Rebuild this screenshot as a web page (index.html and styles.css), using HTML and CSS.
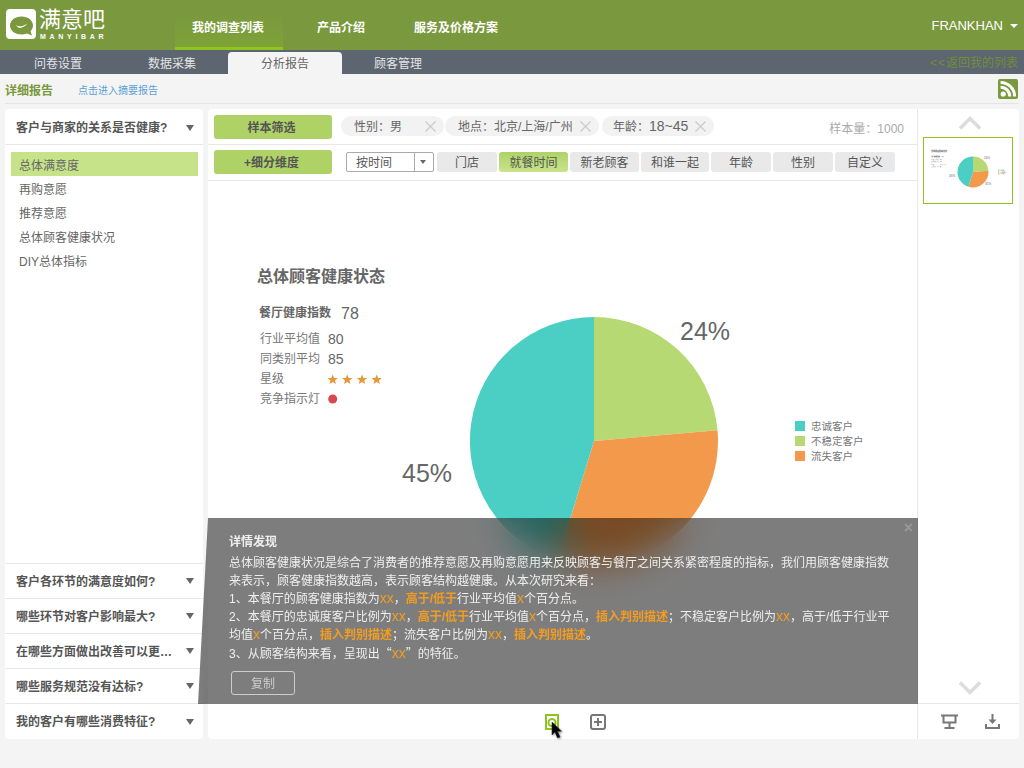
FILE: index.html
```html
<!DOCTYPE html>
<html lang="zh-CN">
<head>
    <meta charset="UTF-8">
    <meta name="viewport" content="width=device-width, initial-scale=1.0">
    <title>满意吧 - 分析报告</title>
    <link rel="stylesheet" href="styles.css">
</head>
<body>
    <!-- Top navigation -->
    <header class="topbar">
        <div class="logo">
            <svg class="logo-mark" width="30" height="30" viewBox="0 0 30 30">
                <rect width="30" height="30" rx="4" fill="#fff"/>
                <path d="M15.500 7.500C9 7.500 4 11.400 4 16.500c0 5 5 9 11.500 9 1.900 0 3.700-.3 5.300-.9l5.200 1.900-1.500-4.300c1.600-1.600 2.500-3.500 2.500-5.700 0-5.100-5-9-11.500-9z" fill="#7a983e"/>
                <path d="M10 16c2.500 2.200 6 1.800 11.500-1.500-4 4.500-9 6.500-11.500 1.500z" fill="#fff"/>
            </svg>
            <div class="logo-text">
                <span class="logo-cn">满意吧</span>
                <span class="logo-en">MANYIBAR</span>
            </div>
        </div>
        <nav class="mainnav">
            <a class="mainnav-item mainnav-active">我的调查列表</a>
            <a class="mainnav-item mainnav-products">产品介绍</a>
            <a class="mainnav-item mainnav-pricing">服务及价格方案</a>
        </nav>
        <div class="user">FRANKHAN<span class="user-caret"></span></div>
    </header>

    <div class="subnav">
        <a class="subnav-tab">问卷设置</a>
        <a class="subnav-tab">数据采集</a>
        <a class="subnav-tab subnav-active">分析报告</a>
        <a class="subnav-tab subnav-last">顾客管理</a>
        <a class="back-link"><span class="back-arrows">&lt;&lt;</span>返回我的列表</a>
    </div>

    <div class="reportbar">
        <strong class="report-title">详细报告</strong>
        <a class="report-link">点击进入摘要报告</a>
        <svg class="rss" width="20" height="20" viewBox="0 0 20 20">
            <rect width="20" height="20" rx="2" fill="#7a983e"/>
            <circle cx="5.200" cy="15" r="2.600" fill="#fff"/>
            <path d="M2.600 8.200a9.200 9.200 0 0 1 9.200 9.200M2.600 3.400a14 14 0 0 1 14 14" fill="none" stroke="#fff" stroke-width="3"/>
        </svg>
    </div>

    <div class="workspace">
        <!-- Question list -->
        <aside class="sidebar">
            <div class="question question-open">
                <span class="question-text">客户与商家的关系是否健康?</span><span class="caret"></span>
            </div>
            <ul class="metrics">
                <li class="metric metric-active">总体满意度</li>
                <li class="metric">再购意愿</li>
                <li class="metric">推荐意愿</li>
                <li class="metric">总体顾客健康状况</li>
                <li class="metric">DIY总体指标</li>
            </ul>
            <div class="questions">
                <div class="question"><span class="question-text">客户各环节的满意度如何?</span><span class="caret"></span></div>
                <div class="question"><span class="question-text">哪些环节对客户影响最大?</span><span class="caret"></span></div>
                <div class="question"><span class="question-text">在哪些方面做出改善可以更…</span><span class="caret"></span></div>
                <div class="question"><span class="question-text">哪些服务规范没有达标?</span><span class="caret"></span></div>
                <div class="question"><span class="question-text">我的客户有哪些消费特征?</span><span class="caret"></span></div>
            </div>
        </aside>

        <!-- Report -->
        <main class="report">
            <div class="toolrow toolrow-filter">
                <button class="action">样本筛选</button>
                <div class="chips">
                    <span class="chip chip-gender">性别：男<svg class="chip-x" width="11" height="11" viewBox="0 0 11 11"><path d="M.5.5l10 10M10.500.5l-10 10"/></svg></span>
                    <span class="chip chip-place">地点：北京/上海/广州<svg class="chip-x" width="11" height="11" viewBox="0 0 11 11"><path d="M.5.5l10 10M10.500.5l-10 10"/></svg></span>
                    <span class="chip chip-age"><span>年龄：<span class="chip-range">18~45</span></span><svg class="chip-x" width="11" height="11" viewBox="0 0 11 11"><path d="M.5.5l10 10M10.500.5l-10 10"/></svg></span>
                </div>
                <span class="sample">样本量：1000</span>
            </div>
            <div class="toolrow toolrow-dims">
                <button class="action">+细分维度</button>
                <div class="select"><span class="select-label">按时间</span><span class="select-arrow"></span></div>
                <div class="pills">
                    <span class="pill">门店</span>
                    <span class="pill pill-active">就餐时间</span>
                    <span class="pill">新老顾客</span>
                    <span class="pill pill-narrow">和谁一起</span>
                    <span class="pill">年龄</span>
                    <span class="pill">性别</span>
                    <span class="pill">自定义</span>
                </div>
            </div>

            <div class="chart-wrap">
                <svg class="chart" width="709" height="523" viewBox="0 0 709 523">
                    <defs>
                        <polygon id="star" points="0,-5.300 1.400,-1.700 5.200,-1.600 2.200,.7 3.300,4.400 0,2.300 -3.300,4.400 -2.200,.7 -5.200,-1.600 -1.400,-1.700" fill="#e5973a"/>
                    </defs>
                    <g id="chart-body">
                        <text class="ch-title" x="49" y="101">总体顾客健康状态</text>
                        <text class="ch-bold" x="51" y="136">餐厅健康指数</text>
                        <text class="ch-big" x="133" y="138">78</text>
                        <text class="ch-label" x="52" y="162">行业平均值</text>
                        <text class="ch-num" x="120" y="163">80</text>
                        <text class="ch-label" x="52" y="182">同类别平均</text>
                        <text class="ch-num" x="120" y="183">85</text>
                        <text class="ch-label" x="52" y="202">星级</text>
                        <use href="#star" x="124.700" y="198.700"/>
                        <use href="#star" x="139.200" y="198.700"/>
                        <use href="#star" x="154" y="198.700"/>
                        <use href="#star" x="168.700" y="198.700"/>
                        <text class="ch-label" x="52" y="222">竞争指示灯</text>
                        <circle cx="124.700" cy="218" r="4.500" fill="#d9484f"/>

                        <path d="M386 260V136A124 124 0 0 1 509.500 249.200Z" fill="#b7d973"/>
                        <path d="M386 260L509.500 249.200A124 124 0 0 1 349.700 378.600Z" fill="#f3994b"/>
                        <path d="M386 260L349.700 378.600A124 124 0 0 1 386 136Z" fill="#4bcfc5"/>
                        <text class="ch-pct" x="472" y="159">24%</text>
                        <text class="ch-pct" x="194" y="301">45%</text>

                        <rect x="587" y="240" width="10" height="10" fill="#4bcfc5"/>
                        <text class="ch-legend" x="603" y="249">忠诚客户</text>
                        <rect x="587" y="255" width="10" height="10" fill="#b7d973"/>
                        <text class="ch-legend" x="603" y="264">不稳定客户</text>
                        <rect x="587" y="270" width="10" height="10" fill="#f3994b"/>
                        <text class="ch-legend" x="603" y="279">流失客户</text>
                    </g>
                </svg>
            </div>

            <!-- Findings panel, slides over the chart -->
            <section class="findings">
                <span class="findings-close">×</span>
                <h3 class="findings-title">详情发现</h3>
                <p class="findings-text">总体顾客健康状况是综合了消费者的推荐意愿及再购意愿用来反映顾客与餐厅之间关系紧密程度的指标，我们用顾客健康指数<br>
                来表示，顾客健康指数越高，表示顾客结构越健康。从本次研究来看：<br>
                1、本餐厅的顾客健康指数为<em>xx</em>，<b>高于/低于</b>行业平均值<em>x</em>个百分点。<br>
                2、本餐厅的忠诚度客户比例为<em>xx</em>，<b>高于/低于</b>行业平均值<em>x</em>个百分点，<b>插入判别描述</b>；不稳定客户比例为<em>xx</em>，高于/低于行业平<br>
                均值<em>x</em>个百分点，<b>插入判别描述</b>；流失客户比例为<em>xx</em>，<b>插入判别描述</b>。<br>
                3、从顾客结构来看，呈现出<span class="quote">“</span><em>xx</em><span class="quote">”</span>的特征。</p>
                <button class="copy">复制</button>
            </section>

            <div class="report-foot">
                <span class="foot-icon"></span>
                <svg class="foot-add" width="16" height="16" viewBox="0 0 16 16">
                    <rect x="1" y="1" width="14" height="14" rx="2" fill="none" stroke="#777" stroke-width="2"/>
                    <path d="M8 4v8M4 8h8" stroke="#777" stroke-width="2"/>
                </svg>
                <svg class="pointer" width="13" height="18" viewBox="0 0 13 18">
                    <path d="M1 1v13l3-3 2.500 6 2.500-1-2.500-5.800H10.500z" fill="#000" stroke="#333" stroke-width=".6"/>
                </svg>
            </div>
        </main>

        <!-- Slide thumbnails -->
        <aside class="slides">
            <svg class="chevron" width="24" height="14" viewBox="0 0 24 14"><path d="M2 12.500L12 2.500l10 10" fill="none" stroke="#dcdcdc" stroke-width="3.500"/></svg>
            <div class="thumb">
                <svg width="88" height="65" viewBox="-6 -12 704 520">
                    <use href="#chart-body"/>
                    <text class="ch-pct" x="482" y="365">31%</text>
                </svg>
            </div>
            <svg class="chevron chevron-down" width="24" height="14" viewBox="0 0 24 14"><path d="M2 1.500l10 10 10-10" fill="none" stroke="#dcdcdc" stroke-width="3.500"/></svg>
            <div class="slides-foot">
                <svg width="17" height="15" viewBox="0 0 17 15">
                    <path d="M0 1.500h17M2.500 1.500v7h12v-7M8.500 8.500v5M3.500 14h10" fill="none" stroke="#777" stroke-width="2"/>
                </svg>
                <svg width="15" height="15" viewBox="0 0 15 15">
                    <path d="M7.500 0v8" stroke="#777" stroke-width="2"/>
                    <path d="M3.500 5.500h8l-4 4.500z" fill="#777"/>
                    <path d="M1 10v4h13v-4" fill="none" stroke="#777" stroke-width="2"/>
                </svg>
            </div>
        </aside>
    </div>
</body>
</html>
```

FILE: styles.css
```css
* {
    box-sizing: border-box;
}

body {
    margin: 0;
    height: 768px;
    overflow: hidden;
    background-color: #f4f4f4;
    font-family: "Liberation Sans", "Noto Sans CJK SC", sans-serif;
    font-size: 12px;
    color: #666;
}

/* top bar */
.topbar {
    display: flex;
    height: 50px;
    padding-left: 6px;
    background-color: #7a983e;
    color: #fff;
}

.logo {
    display: flex;
    align-items: flex-start;
    width: 169px;
    padding-top: 9px;
}

.logo-text {
    display: flex;
    flex-direction: column;
    margin-left: 3px;
}

.logo-cn {
    font-size: 22px;
    line-height: 24px;
    margin-top: -1px;
}

.logo-en {
    font-size: 7px;
    line-height: 9px;
    font-weight: bold;
    letter-spacing: 3.700px;
    margin-left: 1px;
}

.mainnav {
    display: flex;
}

.mainnav-item {
    display: block;
    height: 50px;
    line-height: 56px;
    font-weight: bold;
}

.mainnav-active {
    width: 108px;
    padding-right: 2px;
    text-align: center;
    background: linear-gradient(#7a983e 30%, #7ea337);
    border-bottom: 3px solid #8fc31f;
}

.mainnav-products {
    margin-left: 34px;
}

.mainnav-pricing {
    margin-left: 49px;
}

.user {
    margin-left: auto;
    padding-right: 6px;
    line-height: 52px;
    font-size: 13px;
}

.user-caret {
    display: inline-block;
    margin-left: 7px;
    vertical-align: 2px;
    border: 4px solid transparent;
    border-top-color: #fff;
    border-bottom-width: 0;
}

/* second row */
.subnav {
    display: flex;
    height: 24px;
    background-color: #5c6570;
    color: #e4e4e4;
}

.subnav-tab {
    width: 114px;
    margin-top: 2px;
    padding-left: 2px;
    line-height: 24px;
    text-align: center;
}

.subnav-active {
    padding-left: 0;
    padding-right: 0;
    background-color: #f4f4f4;
    color: #666;
    border-radius: 4px 4px 0 0;
}

.subnav-last {
    padding-left: 0;
    padding-right: 2px;
}

.back-link {
    margin-left: auto;
    padding-right: 6px;
    line-height: 27px;
    color: #718f38;
}

.back-arrows {
    letter-spacing: 1px;
}

.reportbar {
    display: flex;
    align-items: center;
    height: 30px;
    margin: 0 5px;
    padding-top: 2px;
    border-bottom: 1px solid #e4e4e4;
}

.report-title {
    color: #7a983e;
}

.report-link {
    margin-left: 25px;
    font-size: 10px;
    color: #5b9fd4;
}

.rss {
    margin: -2px 1px 0 auto;
}

/* columns */
.workspace {
    display: flex;
    height: 630px;
    margin-top: 5px;
    padding: 0 5px;
}

.sidebar {
    display: flex;
    flex-direction: column;
    width: 198px;
    margin-right: 5px;
    background-color: #fff;
    border-radius: 4px;
}

.question {
    display: flex;
    align-items: center;
    height: 35px;
    padding: 0 9px 2px 11px;
    border-top: 1px solid #e8e8e8;
    font-weight: bold;
    color: #555;
}

.question-open {
    height: 36px;
    padding-bottom: 0;
    border-top: 0;
    border-bottom: 1px solid #e8e8e8;
}

.question-text {
    width: 158px;
    white-space: nowrap;
}

.caret {
    margin-left: auto;
    margin-top: 2px;
    border-style: solid;
    border-width: 6px 4.500px 0;
    border-color: #666 transparent transparent;
}

.metrics {
    list-style: none;
    margin: 7px 5px 0 6px;
    padding: 0;
}

.metric {
    height: 24px;
    padding: 2px 0 0 8px;
    line-height: 24px;
}

.metric-active {
    background-color: #c6e38a;
}

.questions {
    margin-top: auto;
}

.questions .question:last-child {
    height: 36px;
}

/* report */
.report {
    position: relative;
    z-index: 1;
    display: flex;
    flex-direction: column;
    width: 709px;
    background-color: #fff;
    border-radius: 4px 0 0 4px;
}

.toolrow {
    display: flex;
    align-items: center;
    height: 36px;
    border-bottom: 1px solid #e8e8e8;
    padding: 5px 6px 6px;
}

.toolrow-filter {
    padding: 6px 6px 5px;
}

.action {
    width: 118px;
    height: 24px;
    padding: 0 3px 2px 0;
    border: 0;
    border-radius: 3px;
    background-color: #aed266;
    font: bold 12px "Liberation Sans", "Noto Sans CJK SC", sans-serif;
    color: #555;
}

.chips {
    display: flex;
    margin-left: 9px;
    margin-bottom: 2px;
}

.chip {
    display: flex;
    align-items: center;
    justify-content: space-between;
    height: 20px;
    padding: 0 8px 2px 13px;
    border-radius: 10px;
    background-color: #f2f2f2;
    color: #666;
}

.chip-gender {
    width: 103px;
}

.chip-place {
    width: 154px;
    margin: 0 3px 0 1px;
}

.chip-age {
    width: 112px;
    padding-left: 11px;
}

.chip-range {
    font-size: 14px;
}

.chip-x {
    margin-top: 2px;
}

.chip-x path {
    fill: none;
    stroke: #ccc;
    stroke-width: 1.300;
}

.sample {
    margin-left: auto;
    padding-right: 7px;
    color: #aaa;
}

.select {
    display: flex;
    width: 88px;
    height: 20px;
    margin-left: 14px;
    border: 1px solid #aaa;
    border-radius: 2px;
    color: #555;
}

.select-label {
    width: 68px;
    padding-left: 9px;
    line-height: 20px;
    border-right: 1px solid #aaa;
}

.select-arrow {
    margin: 7px 0 0 5px;
    border-style: solid;
    border-width: 4px 3.500px 0;
    border-color: #666 transparent transparent;
}

.pills {
    display: flex;
    gap: 2px;
    margin-left: 3px;
}

.pill {
    min-width: 60px;
    height: 20px;
    padding: 0 10.500px;
    line-height: 22px;
    text-align: center;
    border-radius: 3px;
    background-color: #e9e9e9;
    color: #555;
}

.pill-narrow {
    padding: 0 10px;
}

.pill-active {
    background: linear-gradient(#aed266, #c9e38c);
}

/* chart */
.chart-wrap {
    flex: 1;
    min-height: 0;
}

.chart {
    display: block;
}

.ch-title {
    font-size: 16px;
    font-weight: bold;
    fill: #666;
}

.ch-bold {
    font-size: 12px;
    font-weight: bold;
    fill: #666;
}

.ch-big {
    font-size: 16px;
    fill: #666;
}

.ch-label {
    font-size: 12px;
    fill: #777;
}

.ch-num {
    font-size: 14px;
    fill: #666;
}

.ch-pct {
    font-size: 25px;
    fill: #666;
}

.ch-legend {
    font-size: 10.500px;
    fill: #777;
}

.findings {
    position: absolute;
    left: -10px;
    bottom: 35px;
    width: 720px;
    height: 186px;
    padding: 15px 22px 0 31px;
    background-color: rgba(0, 0, 0, 0.51);
    backdrop-filter: blur(18px);
    clip-path: polygon(10px 0, 100% 0, 100% 100%, 0 100%);
    color: #eee;
}

.findings-close {
    position: absolute;
    top: 1px;
    right: 5px;
    font-size: 16px;
    font-weight: bold;
    color: #999;
}

.findings-title {
    margin: 0 0 3px;
    font-size: 12px;
    line-height: 18px;
}

.findings-text {
    margin: 0;
    line-height: 18px;
    white-space: nowrap;
}

.findings-text em {
    font-style: normal;
    font-size: 14px;
    line-height: 1;
    color: #f39c1f;
}

.findings-text b {
    color: #f39c1f;
}

.quote {
    font-family: "Noto Sans CJK SC", sans-serif;
}

.copy {
    display: block;
    width: 64px;
    height: 24px;
    margin: 8px 0 0 2px;
    padding: 0 0 1px;
    border: 1px solid #ccc;
    border-radius: 3px;
    background: transparent;
    font: 12px "Liberation Sans", "Noto Sans CJK SC", sans-serif;
    color: #ccc;
}

.report-foot {
    position: relative;
    display: flex;
    align-items: center;
    gap: 31px;
    height: 35px;
    padding-left: 337px;
}

.foot-icon {
    width: 14px;
    height: 16px;
    border: 2px solid #8fc31f;
    background: radial-gradient(circle at 50% 55%, #fff 2px, #8fc31f 3px, #8fc31f 4px, #fff 5px);
}

.pointer {
    position: absolute;
    left: 343px;
    top: 17px;
    filter: drop-shadow(1px 1px 1px rgba(0, 0, 0, 0.4));
}

/* right column */
.slides {
    display: flex;
    flex-direction: column;
    width: 102px;
    background-color: #fff;
    border-left: 1px solid #e8e8e8;
    border-radius: 0 4px 4px 0;
}

.chevron {
    flex: none;
    margin: 7px 0 0 40px;
}

.chevron-down {
    margin: auto 0 8px 40px;
}

.thumb {
    width: 90px;
    height: 67px;
    margin: 7px 0 0 5px;
    border: 1px solid #8fc31f;
}

.thumb svg {
    display: block;
}

.slides-foot {
    display: flex;
    align-items: center;
    gap: 27px;
    height: 36px;
    padding: 0 0 1px 23px;
    border-top: 1px solid #e8e8e8;
}
```
